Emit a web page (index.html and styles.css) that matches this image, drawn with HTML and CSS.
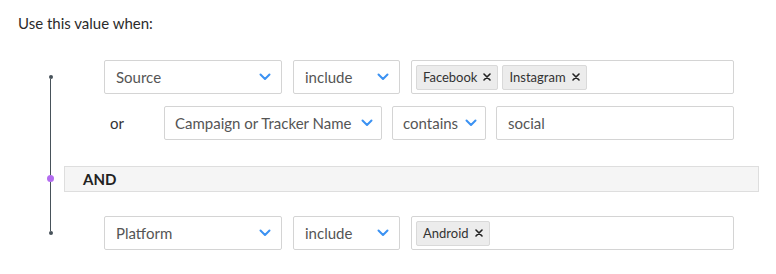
FILE: index.html
```html
<!DOCTYPE html>
<html lang="en">

<head>
    <meta charset="UTF-8">
    <meta name="viewport" content="width=device-width, initial-scale=1.0">
    <title>Value Rules</title>
    <link rel="stylesheet" href="styles.css">
</head>

<body>
    <p class="title">Use this value when:</p>

    <div class="rules">
        <div class="rail">
            <span class="dot"></span>
            <span class="seg seg-top"></span>
            <span class="dot dot-and"></span>
            <span class="seg seg-bottom"></span>
            <span class="dot"></span>
        </div>

        <div class="groups">
            <div class="group">
                <div class="row">
                    <div class="select field-wide">
                        <span>Source</span>
                        <svg class="chev" viewBox="0 0 12 8"><polyline points="1.5,1.5 6,6 10.5,1.5" /></svg>
                    </div>
                    <div class="select field-op">
                        <span>include</span>
                        <svg class="chev" viewBox="0 0 12 8"><polyline points="1.5,1.5 6,6 10.5,1.5" /></svg>
                    </div>
                    <div class="tags">
                        <span class="tag">Facebook <svg class="remove" viewBox="0 0 8 8"><path d="M1 1L7 7M7 1L1 7" /></svg></span>
                        <span class="tag">Instagram <svg class="remove" viewBox="0 0 8 8"><path d="M1 1L7 7M7 1L1 7" /></svg></span>
                    </div>
                </div>

                <div class="row row-or">
                    <span class="or">or</span>
                    <div class="select field-campaign">
                        <span>Campaign or Tracker Name</span>
                        <svg class="chev" viewBox="0 0 12 8"><polyline points="1.5,1.5 6,6 10.5,1.5" /></svg>
                    </div>
                    <div class="select field-contains">
                        <span>contains</span>
                        <svg class="chev" viewBox="0 0 12 8"><polyline points="1.5,1.5 6,6 10.5,1.5" /></svg>
                    </div>
                    <div class="text-input">social</div>
                </div>
            </div>

            <div class="and-bar">AND</div>

            <div class="group">
                <div class="row">
                    <div class="select field-wide">
                        <span>Platform</span>
                        <svg class="chev" viewBox="0 0 12 8"><polyline points="1.5,1.5 6,6 10.5,1.5" /></svg>
                    </div>
                    <div class="select field-op">
                        <span>include</span>
                        <svg class="chev" viewBox="0 0 12 8"><polyline points="1.5,1.5 6,6 10.5,1.5" /></svg>
                    </div>
                    <div class="tags">
                        <span class="tag">Android <svg class="remove" viewBox="0 0 8 8"><path d="M1 1L7 7M7 1L1 7" /></svg></span>
                    </div>
                </div>
            </div>
        </div>
    </div>
</body>

</html>
```

FILE: styles.css
```css
body {
    font-family: Lato, "Open Sans", sans-serif;
    font-size: 15px;
    color: #555;
    background-color: #fff;
    margin: 0;
}

.title {
    margin: 0;
    padding: 13px 0 0 18px;
    line-height: 20px;
    color: #2b2b2b;
}

.rules {
    display: flex;
    margin: 27px 0 0 48px;
}

/* timeline on the left */
.rail {
    display: flex;
    flex-direction: column;
    align-items: center;
    width: 5px;
    margin-top: 15px;
}

.dot {
    width: 4px;
    height: 4px;
    border-radius: 50%;
    background-color: #47525a;
}

.dot-and {
    width: 7px;
    height: 7px;
    background-color: #b36cf0;
}

.seg {
    width: 1px;
    background-color: #47525a;
}

.seg-top {
    height: 96px;
}

.seg-bottom {
    height: 49px;
}

.groups {
    flex: 1;
    margin: 0 17px 0 11px;
}

.group {
    padding: 0 25px 0 40px;
}

.row {
    display: flex;
    gap: 11px;
    height: 34px;
}

.row-or {
    margin-top: 12px;
    gap: 10px;
}

.or {
    width: 44px;
    padding-left: 6px;
    line-height: 34px;
    color: #333;
}

.select,
.text-input,
.tags {
    box-sizing: border-box;
    border: 1px solid #d4d4d4;
    border-radius: 2px;
    background-color: #fff;
    display: flex;
    align-items: center;
}

.select {
    justify-content: space-between;
    padding: 0 10px 0 11px;
    white-space: nowrap;
}

.chev {
    width: 12px;
    height: 8px;
    flex-shrink: 0;
}

.chev polyline {
    fill: none;
    stroke: #3b92f3;
    stroke-width: 2;
    stroke-linecap: round;
    stroke-linejoin: round;
}

.field-wide {
    width: 178px;
}

.field-op {
    width: 107px;
}

.field-campaign {
    width: 218px;
    padding: 0 8px 0 10px;
}

.field-contains {
    width: 94px;
    padding: 0 8px 0 10px;
}

.text-input {
    flex: 1;
    padding-left: 11px;
}

.tags {
    flex: 1;
    gap: 4px;
    padding-left: 4px;
}

.tag {
    box-sizing: border-box;
    display: flex;
    align-items: center;
    gap: 6px;
    height: 25px;
    padding: 0 6px;
    font-size: 13px;
    color: #333;
    background-color: #ececec;
    border: 1px solid #d9d9d9;
    border-radius: 2px;
}

.remove {
    width: 8px;
    height: 8px;
}

.remove path {
    stroke: #222;
    stroke-width: 1.6;
    stroke-linecap: round;
}

.and-bar {
    box-sizing: border-box;
    height: 26px;
    margin-top: 26px;
    margin-bottom: 24px;
    padding-left: 18px;
    line-height: 24px;
    font-weight: bold;
    color: #222;
    background-color: #f5f5f5;
    border: 1px solid #dedede;
}
```
